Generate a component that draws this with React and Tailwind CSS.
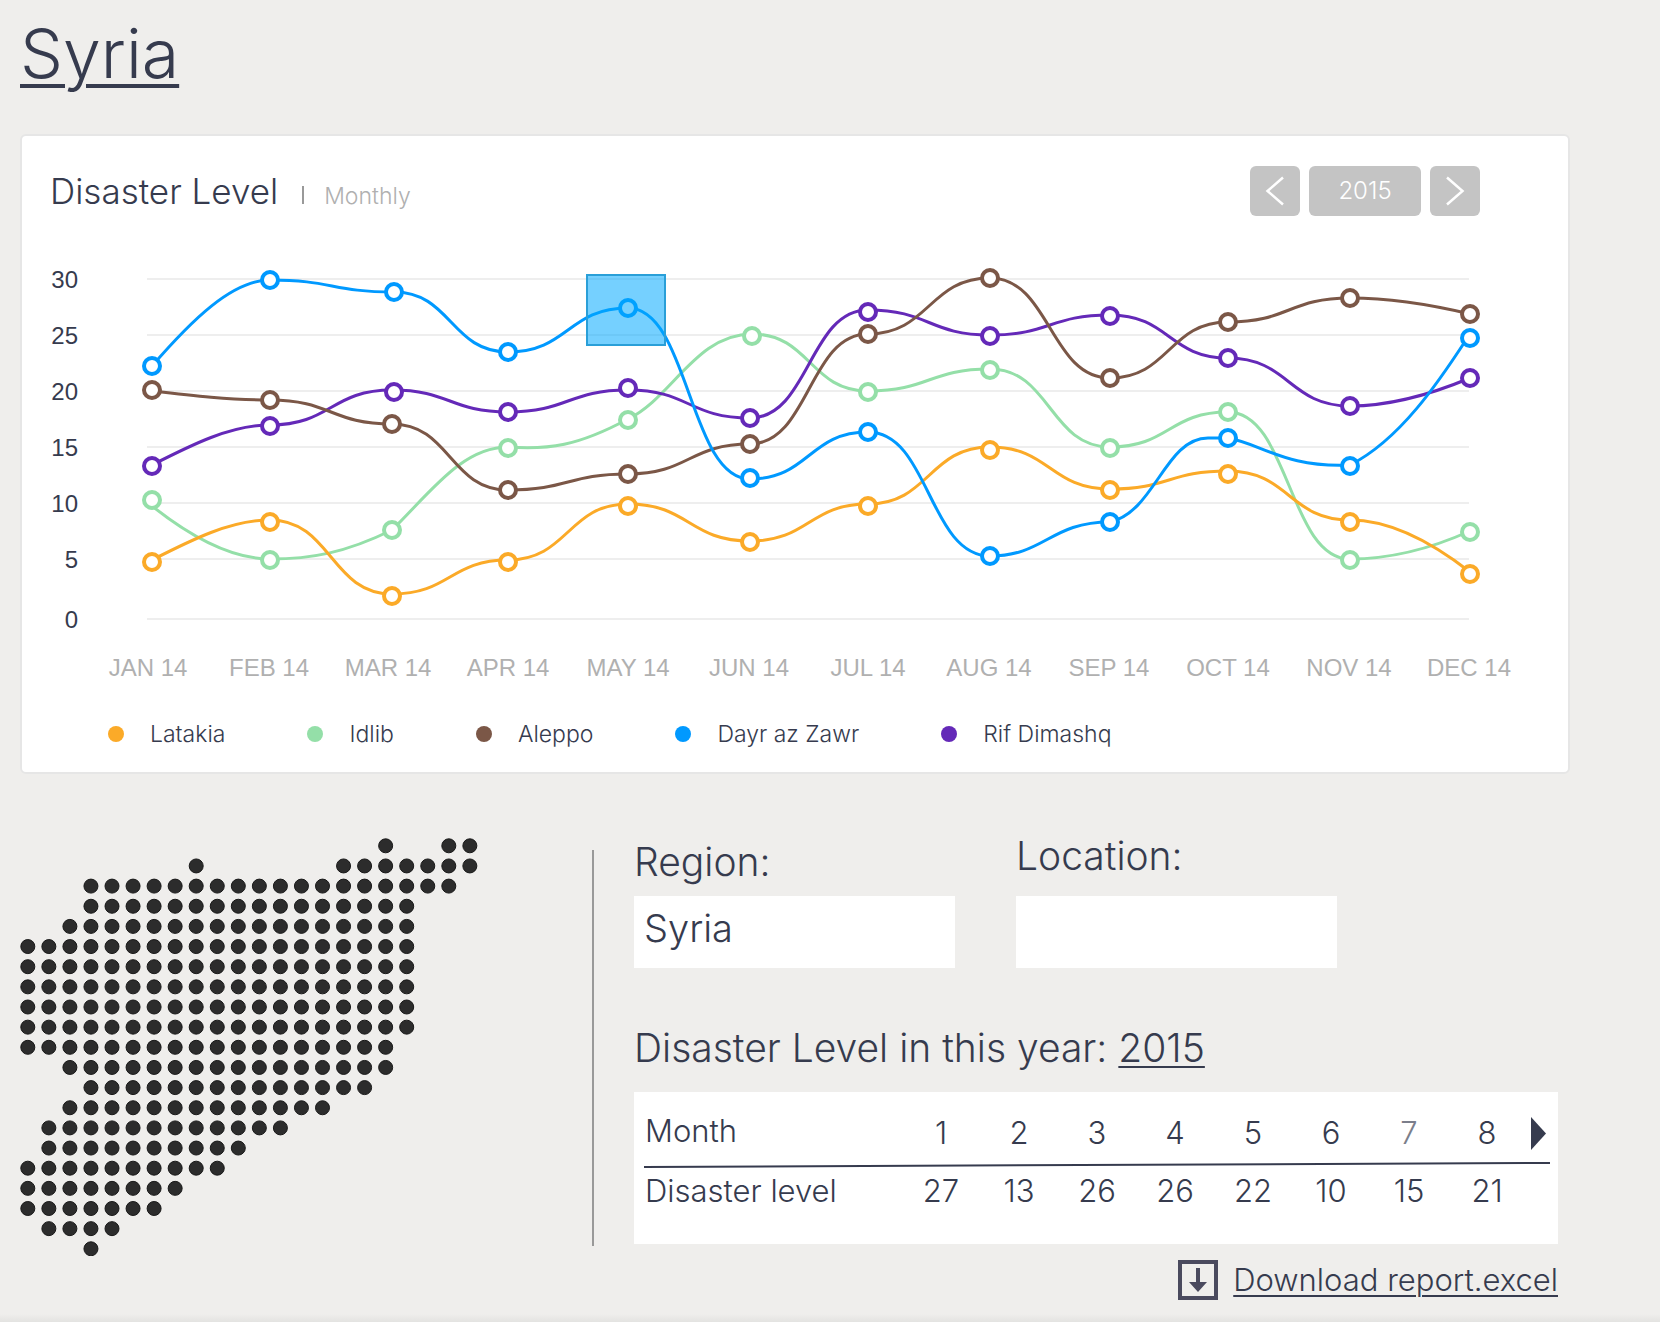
import React from "react";

const MONTHS = [
  ["JAN 14", 148], ["FEB 14", 269], ["MAR 14", 388], ["APR 14", 508],
  ["MAY 14", 628], ["JUN 14", 749], ["JUL 14", 868], ["AUG 14", 989],
  ["SEP 14", 1109], ["OCT 14", 1228], ["NOV 14", 1349], ["DEC 14", 1469],
];

const LEVELS = [[30, 279], [25, 335], [20, 391], [15, 447], [10, 503], [5, 559], [0, 619]];

const X = [152, 270, 392, 508, 628, 750, 868, 990, 1110, 1228, 1350, 1470];

// Each series: marker heights, and the heights its curve passes through.
const SERIES = [
  {
    name: "Idlib",
    color: "#94dfa8",
    marks: [500, 560, 530, 448, 420, 336, 392, 370, 448, 412, 560, 532],
    path:
      "M152 506 C191 537 232 559 270 559 C311 559 345 553 392 530 C430 493 462 447 508 447 C548 450 578 446 628 419 C672 398 696 334 752 334 C810 334 810 391 868 391 C929 391 929 369 990 369 C1050 369 1050 447 1110 447 C1169 447 1169 412 1228 412 C1289 412 1289 559 1350 559 C1390 559 1430 549 1470 531",
    shift: { 5: 752 },
  },
  {
    name: "Latakia",
    color: "#fbaa28",
    marks: [562, 522, 596, 562, 506, 542, 506, 450, 490, 474, 522, 574],
    line: [560, 520, 594, 560, 504, 541, 504, 447, 489, 471, 520, 572],
  },
  {
    name: "Rif Dimashq",
    color: "#6429b8",
    marks: [466, 426, 392, 412, 388, 418, 312, 336, 316, 358, 406, 378],
    line: [465, 425, 390, 412, 390, 418, 310, 335, 315, 358, 406, 378],
    shift: { 2: 394 },
  },
  {
    name: "Aleppo",
    color: "#7b5747",
    marks: [390, 400, 424, 490, 474, 444, 334, 278, 378, 322, 298, 314],
    line: [391, 400, 424, 490, 474, 444, 334, 278, 378, 322, 298, 314],
  },
  {
    name: "Dayr az Zawr",
    color: "#0099ff",
    marks: [366, 280, 292, 352, 308, 478, 432, 556, 522, 438, 466, 338],
    path:
      "M152 366 C191 321 232 280 270 280 C332 280 332 292 394 292 C451 292 451 352 508 352 C568 352 568 308 628 308 C689 308 689 479 750 479 C809 479 809 432 868 432 C929 432 929 556 990 556 C1045 556 1050 522 1110 522 C1155 512 1165 438 1208 438 L1228 438 C1262 444 1285 468 1350 465 C1400 440 1440 380 1466 340",
    shift: { 2: 394 },
  },
];

const LEGEND = ["Latakia", "Idlib", "Aleppo", "Dayr az Zawr", "Rif Dimashq"];

function curve(ys) {
  let d = `M${X[0]} ${ys[0]}`;
  const last = X.length - 1;
  for (let i = 0; i < last; i++) {
    const x0 = X[i];
    const x1 = X[i + 1];
    const y0 = ys[i];
    const y1 = ys[i + 1];
    const dx = x1 - x0;
    const dy = y1 - y0;
    if (i === 0) {
      d += ` C${x0 + dx / 3} ${y0 + dy / 2} ${x0 + (dx * 2) / 3} ${y1} ${x1} ${y1}`;
    } else if (i === last - 1) {
      d += ` C${x0 + dx / 3} ${y0} ${x0 + (dx * 2) / 3} ${y0 + dy * 0.4} ${x1} ${y1}`;
    } else {
      d += ` C${x0 + dx / 2} ${y0} ${x0 + dx / 2} ${y1} ${x1} ${y1}`;
    }
  }
  return d;
}

function Chart() {
  return (
    <svg viewBox="22 216 1546 502" className="block h-auto w-full" role="img" aria-label="Disaster level by month">
      {LEVELS.map(([label, y]) => (
        <g key={label}>
          <rect x="147" y={y - 1} width="1322" height="2" fill="#eeeeee" />
          <text x="78" y={y + 9} textAnchor="end" className="fill-[#363b4e] font-['Liberation_Sans',sans-serif] text-[24px]">
            {label}
          </text>
        </g>
      ))}
      {MONTHS.map(([label, x]) => (
        <text key={label} x={x} y="676" textAnchor="middle" className="fill-[#b0b0b0] font-['Liberation_Sans',sans-serif] text-[24px]">
          {label}
        </text>
      ))}
      {SERIES.map((s) => (
        <path key={s.name} d={s.path || curve(s.line)} fill="none" stroke={s.color} strokeWidth="3" />
      ))}
      {SERIES.map((s) => (
        <g key={s.name} fill="#ffffff" stroke={s.color} strokeWidth="4">
          {s.marks.map((y, i) => (
            <circle key={i} cx={(s.shift && s.shift[i]) || X[i]} cy={y} r="8" />
          ))}
        </g>
      ))}
      <rect x="587" y="275" width="78" height="70" fill="#00a9ff" fillOpacity="0.54" stroke="#2a9fd8" strokeWidth="2" />
    </svg>
  );
}

// Filled column ranges for every row of the dotted map.
const MAP_ROWS = [
  [[17, 17], [20, 21]],
  [[8, 8], [15, 21]],
  [[3, 20]],
  [[3, 18]],
  [[2, 18]],
  [[0, 18]],
  [[0, 18]],
  [[0, 18]],
  [[0, 18]],
  [[0, 18]],
  [[0, 17]],
  [[2, 17]],
  [[3, 16]],
  [[2, 14]],
  [[1, 12]],
  [[1, 10]],
  [[0, 9]],
  [[0, 7]],
  [[0, 6]],
  [[1, 4]],
  [[3, 3]],
];

function DotMap() {
  const dots = [];
  MAP_ROWS.forEach((ranges, r) =>
    ranges.forEach(([from, to]) => {
      for (let c = from; c <= to; c++) {
        dots.push(<circle key={`${r}-${c}`} cx={7.8 + c * 21.05} cy={7.8 + r * 20.15} r="7" />);
      }
    })
  );
  return (
    <svg viewBox="0 0 459 418" className="block h-[418px] w-[459px]" role="img" aria-label="Map of Syria" fill="#2c2c2c" stroke="#191919" strokeWidth="1">
      {dots}
    </svg>
  );
}

const TABLE = [[1, 27], [2, 13], [3, 26], [4, 26], [5, 22], [6, 10], [7, 15], [8, 21]];

export default function App() {
  return (
    <div className="flex min-h-screen flex-col bg-[#efeeec] font-['Inter',sans-serif] font-light text-[#363b4e]">
      <main className="pr-[90px] pb-3 pl-5">
        <h1 className="mb-7 text-[68px] leading-[106px]">
          <a href="#syria" className="underline decoration-4 underline-offset-[6px]">Syria</a>
        </h1>

        <section className="rounded-md border-2 border-[#e6e6e6] bg-white pt-[30px] pb-[22px]">
          <header className="flex h-[50px] items-start justify-between pr-[88px] pl-7">
            <div className="flex items-baseline leading-[50px]">
              <h2 className="text-[35px]">Disaster Level</h2>
              <span className="ml-6 h-[18px] w-0.5 bg-[#999999]" />
              <span className="ml-5 text-[23px] text-[#b0b0b0]">Monthly</span>
            </div>
            <nav className="flex gap-[9px]">
              <button type="button" aria-label="Previous year" className="flex size-[50px] items-center justify-center rounded-md bg-[#c4c4c4]">
                <svg width="50" height="50" viewBox="0 0 50 50" fill="none" stroke="#ffffff" strokeWidth="2.5">
                  <path d="M33 11.500 17.500 25 33 38.500" />
                </svg>
              </button>
              <button type="button" className="h-[50px] w-28 rounded-md bg-[#c4c4c4] text-[24px] text-white">2015</button>
              <button type="button" aria-label="Next year" className="flex size-[50px] items-center justify-center rounded-md bg-[#c4c4c4]">
                <svg width="50" height="50" viewBox="0 0 50 50" fill="none" stroke="#ffffff" strokeWidth="2.5">
                  <path d="M17 11.500 32.500 25 17 38.500" />
                </svg>
              </button>
            </nav>
          </header>
          <Chart />
          <ul className="flex gap-[82px] pl-[86px] text-[23px] leading-8">
            {LEGEND.map((name) => (
              <li key={name} className="flex items-center gap-[26px]">
                <span className="size-4 rounded-full" style={{ backgroundColor: SERIES.find((s) => s.name === name).color }} />
                {name}
              </li>
            ))}
          </ul>
        </section>

        <section className="mt-16 flex pr-3">
          <div className="w-[572px] shrink-0">
            <DotMap />
          </div>
          <div className="mt-3 mr-10 mb-2.5 w-0.5 shrink-0 bg-[#999999]" />
          <div className="min-w-0 flex-1">
            <form className="flex items-end gap-[61px] text-[39px]">
              <div className="flex flex-col gap-4">
                <label htmlFor="region" className="leading-9">Region:</label>
                <input id="region" type="text" defaultValue="Syria" className="h-[72px] w-[321px] bg-white pb-2 pl-2.5 text-[38px] outline-none" />
              </div>
              <div className="flex flex-col gap-[22px]">
                <label htmlFor="location" className="leading-9">Location:</label>
                <input id="location" type="text" className="h-[72px] w-[321px] bg-white pb-2 pl-2.5 text-[38px] outline-none" />
              </div>
            </form>

            <h2 className="mt-14 mb-5 text-[39px] leading-[48px]">
              Disaster Level in this year:{" "}
              <a href="#2015" className="underline decoration-2 underline-offset-4">2015</a>
            </h2>

            <div className="bg-white pr-2 pb-[30px] pl-2.5">
              <table className="w-full table-fixed border-collapse text-[31px] leading-9">
                <colgroup>
                  <col />
                  {TABLE.map(([m]) => (
                    <col key={m} className="w-[78px]" />
                  ))}
                  <col className="w-6" />
                </colgroup>
                <tbody>
                  <tr className="h-[70px]">
                    <th scope="row" className="pt-2 pl-px text-left font-light">Month</th>
                    {TABLE.map(([m]) => (
                      <th key={m} scope="col" className={m === 7 ? "pt-3 font-light text-[#7b7e8b]" : "pt-3 font-light"}>{m}</th>
                    ))}
                    <td className="pt-3">
                      <button type="button" aria-label="Next months" className="mx-auto block">
                        <svg width="15" height="34" viewBox="0 0 15 34" fill="#363b4e">
                          <path d="M0 1v33l15-16.500z" />
                        </svg>
                      </button>
                    </td>
                  </tr>
                  <tr aria-hidden="true">
                    <td colSpan={10}>
                      <svg viewBox="0 0 906 6" preserveAspectRatio="none" className="block h-1.5 w-full">
                        <path d="M0 5 906 1" stroke="#363b4e" strokeWidth="2" />
                      </svg>
                    </td>
                  </tr>
                  <tr className="h-[46px]">
                    <th scope="row" className="pl-px text-left font-light">Disaster level</th>
                    {TABLE.map(([m, level]) => (
                      <td key={m} className="text-center">{level}</td>
                    ))}
                    <td />
                  </tr>
                </tbody>
              </table>
            </div>
          </div>
        </section>

        <div className="mt-1 flex justify-end pr-3">
          <a href="#download" className="flex items-center gap-[15px] text-[31px] leading-10">
            <svg width="40" height="40" viewBox="0 0 40 40" fill="#4a4a5e">
              <path fillRule="evenodd" d="M0 0h40v40H0zM4 4v32h32V4z" />
              <path d="M18 8h4v14h7l-9 10-9-10h7z" />
            </svg>
            <span className="underline decoration-2 underline-offset-4">Download report.excel</span>
          </a>
        </div>
      </main>
      <div className="mt-auto h-2 bg-linear-to-b from-[#efeeec] to-[#e3e3e1]" />
    </div>
  );
}
